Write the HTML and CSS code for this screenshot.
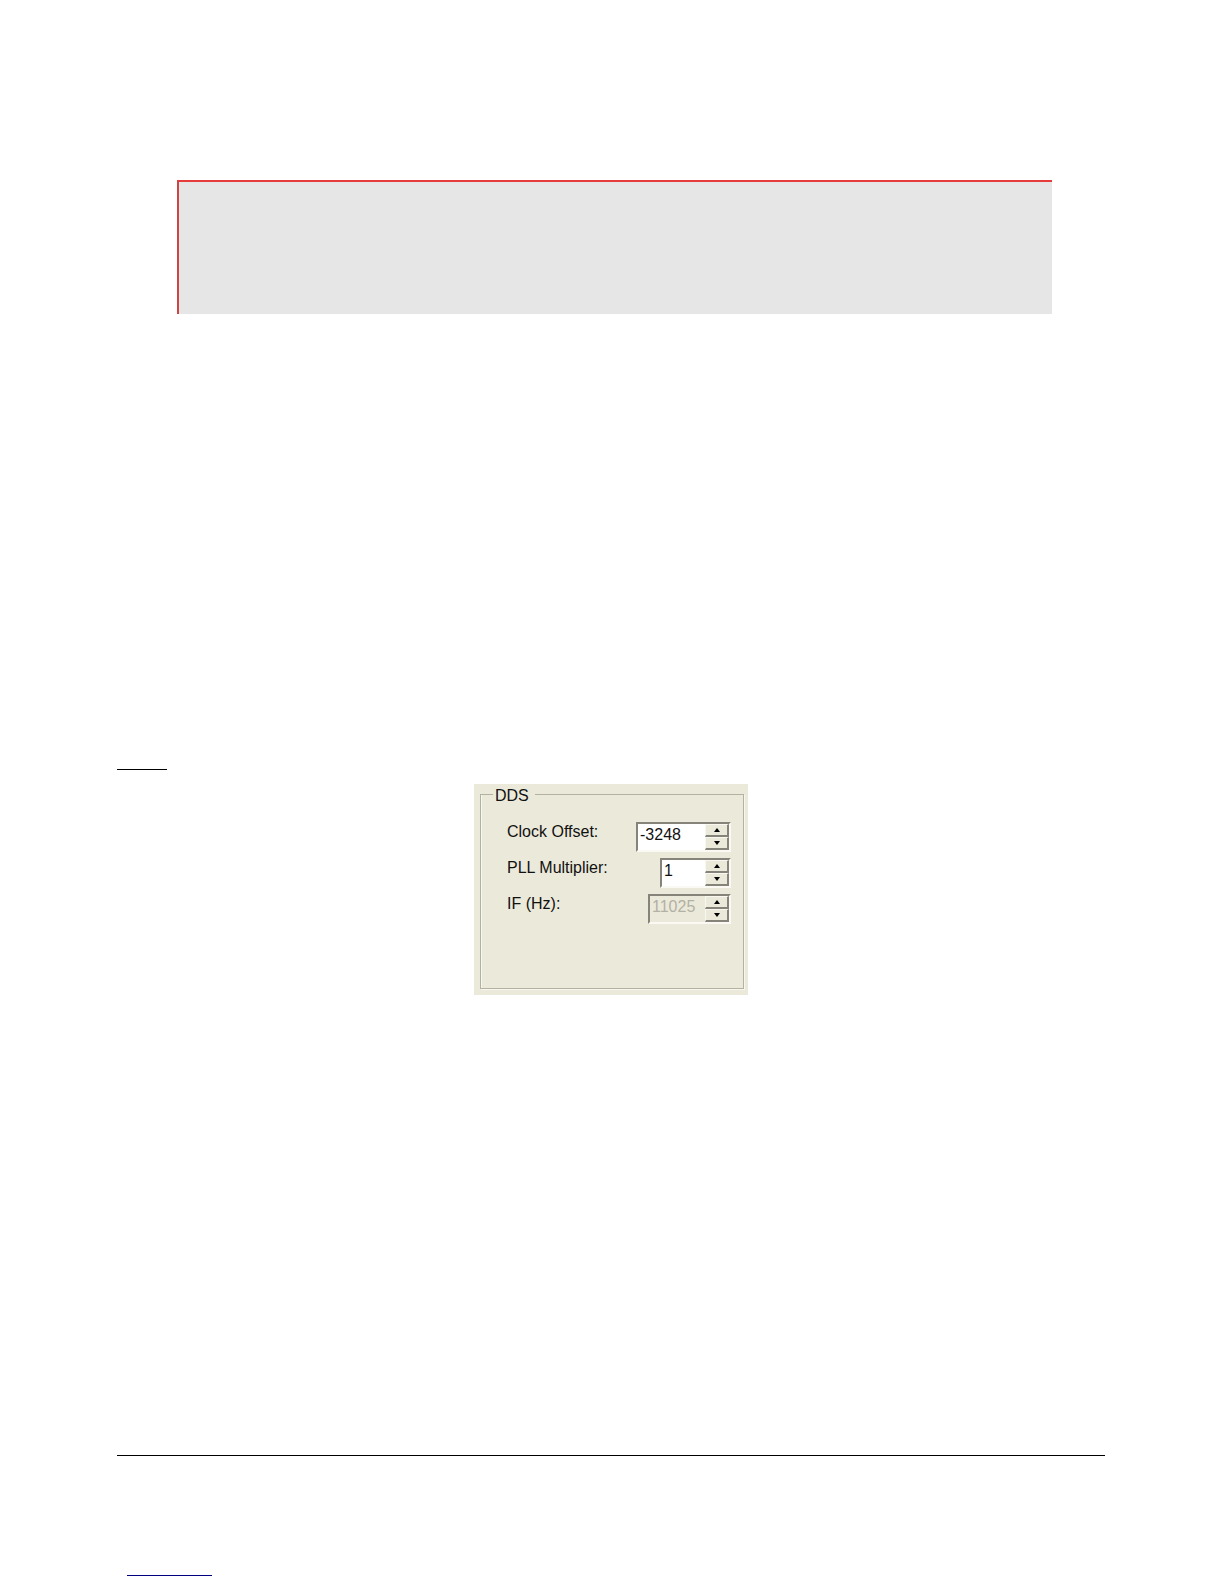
FILE: index.html
```html
<!DOCTYPE html>
<html lang="en">
<head>
<meta charset="utf-8">
<title>DDS</title>
<link rel="stylesheet" href="styles.css">
</head>
<body>
<main class="page">
  <aside class="callout"></aside>
  <hr class="short-rule">
  <form class="panel">
    <fieldset class="group">
      <legend class="title">DDS</legend>
      <div class="row">
        <label for="clock">Clock Offset:</label>
        <div class="spinner wide">
          <input class="value" id="clock" type="text" value="-3248">
          <div class="steps">
            <button class="step" type="button" aria-label="Increase clock offset"><svg width="6" height="4" viewBox="0 0 6 4"><path d="M0 4L3 0L6 4Z"/></svg></button>
            <button class="step" type="button" aria-label="Decrease clock offset"><svg width="6" height="4" viewBox="0 0 6 4"><path d="M0 0L3 4L6 0Z"/></svg></button>
          </div>
        </div>
      </div>
      <div class="row">
        <label for="pll">PLL Multiplier:</label>
        <div class="spinner narrow">
          <input class="value" id="pll" type="text" value="1">
          <div class="steps">
            <button class="step" type="button" aria-label="Increase multiplier"><svg width="6" height="4" viewBox="0 0 6 4"><path d="M0 4L3 0L6 4Z"/></svg></button>
            <button class="step" type="button" aria-label="Decrease multiplier"><svg width="6" height="4" viewBox="0 0 6 4"><path d="M0 0L3 4L6 0Z"/></svg></button>
          </div>
        </div>
      </div>
      <div class="row">
        <label for="freq">IF (Hz):</label>
        <div class="spinner medium disabled">
          <input class="value" id="freq" type="text" value="11025" disabled>
          <div class="steps">
            <button class="step" type="button" disabled aria-label="Increase IF"><svg width="6" height="4" viewBox="0 0 6 4"><path d="M0 4L3 0L6 4Z"/></svg></button>
            <button class="step" type="button" disabled aria-label="Decrease IF"><svg width="6" height="4" viewBox="0 0 6 4"><path d="M0 0L3 4L6 0Z"/></svg></button>
          </div>
        </div>
      </div>
    </fieldset>
  </form>
  <hr class="footer-rule">
  <hr class="link-rule">
</main>
</body>
</html>
```
FILE: styles.css
```css
* {
  box-sizing: border-box;
}

body {
  margin: 0;
  background: #fff;
  color: #111;
  font: 16px/20px "Liberation Sans", Arial, sans-serif;
}

.page {
  display: flex;
  flex-direction: column;
  padding: 180px 119px 8px 117px;
}

hr {
  width: 100%;
  height: 1px;
  margin: 0;
  border: 0;
  background: #000;
}

.callout {
  height: 134px;
  margin: 0 53px 0 60px;
  border-top: 2px solid #e63c3c;
  border-left: 2px solid #cc4444;
  background: #e6e6e6;
}

.short-rule {
  width: 50px;
  margin-top: 455px;
}

.panel {
  align-self: center;
  width: 274px;
  margin-top: 14px;
  padding: 2px 4px 6px 6px;
  background: #ebe9da;
}

/* Etched frame: a dark line with a light line beside it */
.group {
  min-height: 203px;
  margin: 0;
  padding: 20px 12px 0 26px;
  border: 1px solid #b3b19f;
  box-shadow: inset 1px 0 #f8f7ef, 1px 1px #f8f7ef;
}

.title {
  height: 16px;
  margin-left: -14px;
  padding: 0 6px 0 2px;
}

.row {
  display: flex;
  justify-content: space-between;
  height: 36px;
}

.spinner {
  display: flex;
  height: 30px;
  border: 2px solid #85837a;
  border-right-color: #faf9f3;
  border-bottom-color: #faf9f3;
  background: #fff;
}

.wide {
  width: 95px;
}

.narrow {
  width: 71px;
}

.medium {
  width: 83px;
}

.disabled {
  background: #ebe9da;
}

.value {
  flex: 1;
  min-width: 0;
  height: 21px;
  padding: 0 0 0 2px;
  border: 0;
  outline: 0;
  background: transparent;
  color: #111;
  font: inherit;
}

.value:disabled {
  color: #b3b1a4;
}

.steps {
  display: flex;
  flex-direction: column;
  width: 24px;
}

.step {
  display: flex;
  align-items: center;
  justify-content: center;
  height: 13px;
  padding: 0;
  border: 1px solid #f8f7f0;
  border-right: 2px solid #85837a;
  border-bottom: 2px solid #85837a;
  background: #ebe9da;
}

.footer-rule {
  margin-top: 460px;
}

.link-rule {
  width: 85px;
  margin: 119px 0 0 10px;
  background: #000080;
}
```
